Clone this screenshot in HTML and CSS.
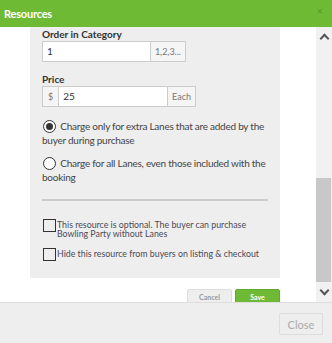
FILE: index.html
```html
<!DOCTYPE html>
<html lang="en">
<head>
    <meta charset="UTF-8">
    <meta name="viewport" content="width=device-width, initial-scale=1.0">
    <title>Resources</title>
    <link rel="stylesheet" href="styles.css">
</head>
<body>
    <div class="modal">
        <!-- Cabeçalho -->
        <header class="modal-header">
            <h1>Resources</h1>
            <span class="close-x">&times;</span>
        </header>

        <!-- Corpo com rolagem -->
        <div class="modal-body">
            <div class="content">
                <section class="panel">
                    <label class="field-label">Order in Category</label>
                    <div class="input-group order-group">
                        <span class="field">1</span>
                        <span class="addon">1,2,3...</span>
                    </div>

                    <label class="field-label">Price</label>
                    <div class="input-group price-group">
                        <span class="addon">$</span>
                        <span class="field">25</span>
                        <span class="addon">Each</span>
                    </div>

                    <div class="radio-row">
                        <span class="radio checked"></span>
                        Charge only for extra Lanes that are added by the buyer during purchase
                    </div>
                    <div class="radio-row">
                        <span class="radio"></span>
                        Charge for all Lanes, even those included with the booking
                    </div>

                    <hr class="divider">

                    <div class="check-row">
                        <span class="checkbox"></span>
                        <span class="check-text narrow">This resource is optional. The buyer can purchase Bowling Party without Lanes</span>
                    </div>
                    <div class="check-row">
                        <span class="checkbox"></span>
                        <span class="check-text">Hide this resource from buyers on listing &amp; checkout</span>
                    </div>
                </section>

                <div class="actions">
                    <button class="btn-cancel">Cancel</button>
                    <button class="btn-save">Save</button>
                </div>
            </div>

            <!-- Barra de rolagem -->
            <div class="scrollbar">
                <span class="arrow up"></span>
                <div class="track">
                    <div class="thumb"></div>
                </div>
                <span class="arrow down"></span>
            </div>
        </div>

        <!-- Rodapé -->
        <footer class="modal-footer">
            <button class="btn-close">Close</button>
        </footer>
    </div>
</body>
</html>
```

FILE: styles.css
```css
/* Reset */
* {
    margin: 0;
    padding: 0;
    box-sizing: border-box;
    font-family: Lato, "Open Sans", sans-serif;
}

body {
    width: 332px;
    height: 343px;
    overflow: hidden;
    background-color: #fff;
}

.modal {
    display: flex;
    flex-direction: column;
    height: 343px;
}

/* Cabeçalho */
.modal-header {
    height: 27px;
    background-color: #6fba35;
    display: flex;
    align-items: center;
    justify-content: space-between;
    padding: 0 9px 0 4px;
}

.modal-header h1 {
    color: #fff;
    font-size: 11px;
    font-weight: bold;
    letter-spacing: -0.2px;
}

.close-x {
    color: #4f8f25;
    font-size: 11px;
    margin-top: -6px;
    opacity: 0.7;
}

/* Corpo */
.modal-body {
    height: 276px;
    display: flex;
    overflow: hidden;
    border-bottom: 1px solid #ddd;
}

.content {
    flex: 1;
    padding-left: 30px;
}

.panel {
    width: 250px;
    background-color: #eee;
    padding: 1px 9px 17px 12px;
    color: #444;
    font-size: 10px;
}

.field-label {
    display: block;
    font-size: 10px;
    font-weight: bold;
    color: #333;
    line-height: 12px;
    margin-bottom: 1px;
}

.input-group {
    display: flex;
    height: 21px;
    border: 1px solid #ccc;
    background-color: #fff;
    font-size: 10px;
    margin-bottom: 11px;
}

.input-group .field {
    flex: 1;
    padding-left: 4px;
    line-height: 19px;
    color: #333;
}

.input-group .addon {
    background-color: #f5f5f5;
    color: #777;
    font-size: 9px;
    line-height: 19px;
    padding: 0 4px;
}

.order-group {
    width: 144px;
}

.order-group .addon {
    border-left: 1px solid #ccc;
}

.price-group {
    width: 154px;
    margin-bottom: 12px;
}

.price-group .addon:first-child {
    border-right: 1px solid #ccc;
    padding: 0 5px;
}

.price-group .addon:last-child {
    border-left: 1px solid #ccc;
}

.radio-row {
    line-height: 14px;
    letter-spacing: -0.25px;
    margin-bottom: 9px;
}

.radio {
    display: inline-block;
    width: 13px;
    height: 13px;
    border: 1px solid #333;
    border-radius: 50%;
    background-color: #fff;
    vertical-align: -3px;
    margin: 0 2px 0 1px;
    position: relative;
}

.radio.checked::after {
    content: "";
    position: absolute;
    top: 2px;
    left: 2px;
    width: 7px;
    height: 7px;
    border-radius: 50%;
    background-color: #333;
}

.divider {
    border: none;
    border-top: 2px solid #ccc;
    margin: 15px 3px 18px 0;
}

.check-row {
    display: flex;
    align-items: flex-start;
    font-size: 8.8px;
    line-height: 9px;
    margin-bottom: 10px;
    color: #4a4a55;
}

.check-row:last-child {
    margin-bottom: 0;
}

.check-text {
    padding-top: 1px;
}

.check-text.narrow {
    max-width: 196px;
}

.checkbox {
    flex-shrink: 0;
    width: 13px;
    height: 13px;
    border: 1.5px solid #333;
    margin: 0 1px 0 1px;
}

/* Ações */
.actions {
    width: 250px;
    display: flex;
    justify-content: flex-end;
    gap: 3px;
    margin-top: 11px;
}

.actions button {
    width: 45px;
    height: 16px;
    font-size: 7px;
    font-weight: bold;
    border-radius: 2px;
}

.btn-cancel {
    background-color: #eee;
    border: 1px solid #ddd;
    color: #999;
}

.btn-save {
    background-color: #6fba35;
    border: 1px solid #64a82e;
    color: #fff;
}

/* Barra de rolagem */
.scrollbar {
    width: 16px;
    background-color: #f1f1f1;
    display: flex;
    flex-direction: column;
}

.arrow {
    height: 20px;
    display: flex;
    align-items: center;
    justify-content: center;
}

.arrow::before {
    content: "";
    width: 5px;
    height: 5px;
    border-left: 2px solid #555;
    border-top: 2px solid #555;
}

.arrow.up::before {
    transform: rotate(45deg);
    margin-top: 3px;
}

.arrow.down::before {
    transform: rotate(225deg);
    margin-top: -3px;
}

.track {
    flex: 1;
    display: flex;
    flex-direction: column;
    justify-content: flex-end;
}

.thumb {
    height: 104px;
    width: 15px;
    background-color: #c8c8c8;
}

/* Rodapé */
.modal-footer {
    flex: 1;
    background-color: #eee;
    display: flex;
    justify-content: flex-end;
    align-items: flex-start;
    padding: 10px 9px 0 0;
}

.btn-close {
    width: 44px;
    height: 22px;
    background-color: #eee;
    border: 1px solid #ddd;
    border-radius: 2px;
    color: #aaa;
    font-size: 11px;
}
```
